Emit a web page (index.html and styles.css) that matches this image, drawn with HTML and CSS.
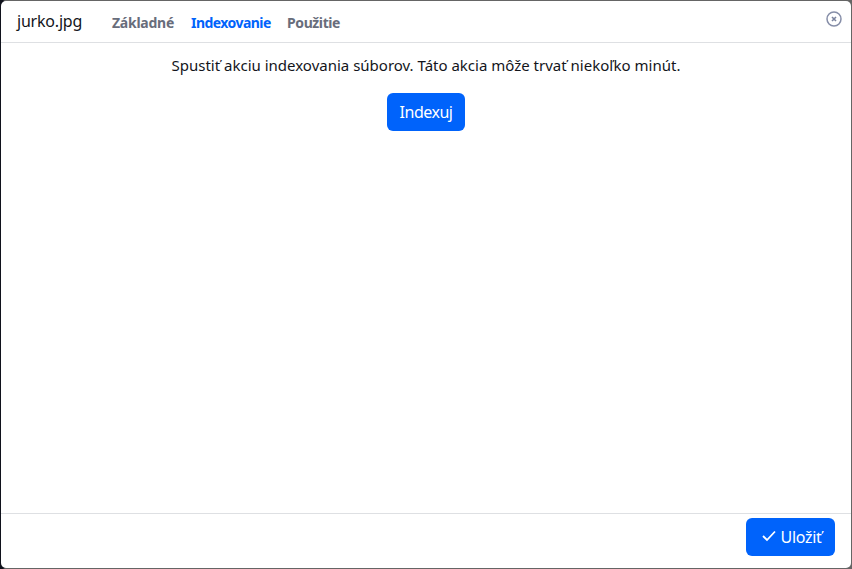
FILE: index.html
```
<!DOCTYPE html>
<html lang="sk">
<head>
<meta charset="utf-8">
<title>jurko.jpg</title>
<link rel="stylesheet" href="styles.css">
</head>
<body>
<div class="backdrop">
<div class="dialog">
  <header class="header">
    <span class="title">jurko.jpg</span>
    <nav class="tabs">
      <a class="tab t1">Základné</a>
      <a class="tab t2 active">Indexovanie</a>
      <a class="tab t3">Použitie</a>
    </nav>
    <svg class="close" width="16" height="16" viewBox="0 0 16 16" fill="none"><circle cx="8" cy="8" r="7" stroke="#868ea8" stroke-width="1.5"/><path d="M6 6l4 4M10 6L6 10" stroke="#7b849f" stroke-width="1.6"/></svg>
  </header>
  <main class="content">
    <p class="message">Spustiť akciu indexovania súborov. Táto akcia môže trvať niekoľko minút.</p>
    <button class="btn index"><span>Indexuj</span></button>
  </main>
  <footer class="footer">
    <button class="btn save"><svg class="check" width="14" height="12" viewBox="0 0 14 12" fill="none"><path d="M1 6l4 4 8-8.5" stroke="#fff" stroke-width="1.8"/></svg><span>Uložiť</span></button>
  </footer>
</div>
</div>
</body>
</html>
```
FILE: styles.css
```
* { box-sizing: border-box; }
body { margin: 0; font-family: "Noto Sans", sans-serif; color: #13151b; }
.backdrop { height: 569px; padding: 1px; background: linear-gradient(90deg, #10121c 0 3px, #656565 5px); overflow: hidden; }
.dialog { height: 567px; display: flex; flex-direction: column; background: #fff; border-radius: 5px; white-space: nowrap; }
.header { height: 42px; flex: none; display: flex; border-bottom: 1px solid #dee0e3; padding: 0 9px 0 16px; }
.title { width: 95px; font-size: 16px; line-height: 40px; letter-spacing: -.2px; }
.tabs { display: flex; flex: 1; line-height: 43px; font-size: 14px; font-weight: 700; color: #686d7b; }
.t1 { width: 79px; letter-spacing: -.25px; }
.t2 { width: 96px; letter-spacing: -.55px; }
.t3 { letter-spacing: -.4px; }
.active { color: #0063fb; }
.close { margin-top: 10px; }
.content { flex: 1; display: flex; flex-direction: column; align-items: center; }
.message { margin: 10px 0 16px; font-size: 15px; line-height: 24px; letter-spacing: 0; }
.btn { height: 38px; border: 0; border-radius: 6px; padding: 0; background: #0063fb; color: #fff; font: 16px/38px "Noto Sans", sans-serif; display: flex; align-items: center; justify-content: center; letter-spacing: -.5px; }
.index { width: 78px; }
.save { width: 89px; gap: 5px; padding-left: 2px; letter-spacing: -.3px; }
.check { margin-top: -2px; }
.footer { height: 55px; border-top: 1px solid #dee0e3; padding: 4px 16px; display: flex; justify-content: flex-end; }
```
